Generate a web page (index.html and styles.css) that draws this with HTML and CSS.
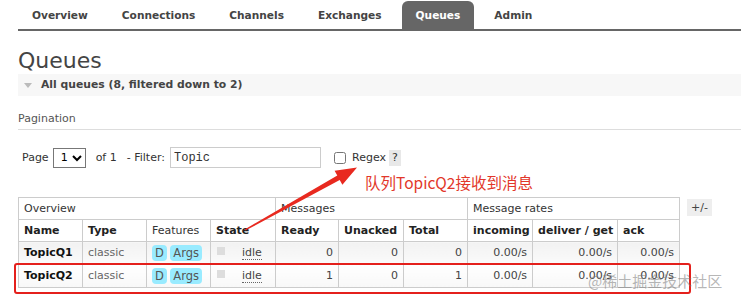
FILE: index.html
```html
<!DOCTYPE html>
<html>
<head>
  <title>Queues</title>
  <link rel="stylesheet" href="styles.css">
</head>
<body>
  <div class="page">
    <ul class="tabs">
      <li><a href="#">Overview</a></li>
      <li><a href="#">Connections</a></li>
      <li><a href="#">Channels</a></li>
      <li><a href="#">Exchanges</a></li>
      <li class="selected"><a href="#">Queues</a></li>
      <li><a href="#">Admin</a></li>
    </ul>

    <div class="content">
      <h1>Queues</h1>
      <div class="section-head"><span class="tri"></span>All queues (8, filtered down to 2)</div>

      <div class="pagination-head">Pagination</div>
      <div class="filter-row">
        <label>Page</label>
        <select class="page-select"><option>1</option></select>
        <span>of 1</span>
        <label class="filter-label">- Filter:</label>
        <input class="filter-input" type="text" value="Topic">
        <input class="regex-box" type="checkbox">
        <label>Regex</label>
        <span class="help">?</span>
      </div>

      <div class="table-area">
        <table class="list">
          <colgroup>
            <col style="width:64px"><col style="width:64px"><col style="width:64px"><col style="width:65px">
            <col style="width:63px"><col style="width:65px"><col style="width:64px">
            <col style="width:65px"><col style="width:85px"><col style="width:62px">
          </colgroup>
          <thead>
            <tr class="group">
              <th colspan="4">Overview</th>
              <th colspan="3">Messages</th>
              <th colspan="3">Message rates</th>
            </tr>
            <tr>
              <th>Name</th>
              <th>Type</th>
              <th class="plain">Features</th>
              <th>State</th>
              <th>Ready</th>
              <th>Unacked</th>
              <th>Total</th>
              <th>incoming</th>
              <th>deliver / get</th>
              <th>ack</th>
            </tr>
          </thead>
          <tbody>
            <tr class="alt1">
              <td class="name">TopicQ1</td>
              <td class="muted">classic</td>
              <td><span class="badge">D</span> <span class="badge">Args</span></td>
              <td><span class="state-dot"></span><span class="state">idle</span></td>
              <td class="num">0</td>
              <td class="num">0</td>
              <td class="num">0</td>
              <td class="num">0.00/s</td>
              <td class="num">0.00/s</td>
              <td class="num">0.00/s</td>
            </tr>
            <tr class="alt2">
              <td class="name">TopicQ2</td>
              <td class="muted">classic</td>
              <td><span class="badge">D</span> <span class="badge">Args</span></td>
              <td><span class="state-dot"></span><span class="state">idle</span></td>
              <td class="num">1</td>
              <td class="num">0</td>
              <td class="num">1</td>
              <td class="num">0.00/s</td>
              <td class="num">0.00/s</td>
              <td class="num">0.00/s</td>
            </tr>
          </tbody>
        </table>
        <span class="toggle">+/-</span>
      </div>
    </div>

    <!-- screenshot annotations -->
    <div class="note">队列TopicQ2接收到消息</div>
    <svg class="arrow" width="741" height="300" viewBox="0 0 741 300">
      <polygon fill="#e8291f" points="244.6,229.4 337.3,175.6 334.6,170.8 357,167.5 342.4,184.8 339.7,180 245.4,230.6"/>
    </svg>
    <div class="highlight"></div>
    <div class="watermark">@稀土掘金技术社区</div>
  </div>
</body>
</html>
```

FILE: styles.css
```css
body {
  margin: 0;
  font-family: "DejaVu Sans", Verdana, sans-serif;
  font-size: 11px;
  color: #444;
  background: #fff;
}

.page {
  position: relative;
  width: 741px;
  height: 300px;
  overflow: hidden;
}

.tabs {
  list-style: none;
  margin: 1px 0 0 18px;
  padding: 0;
  display: flex;
  border-bottom: 2px solid #666;
}

.tabs li {
  margin-right: 6px;
}

.tabs a {
  display: block;
  height: 28px;
  line-height: 29px;
  padding: 0 14px;
  font-size: 10.6px;
  font-weight: bold;
  color: #444;
  text-decoration: none;
  border-radius: 6px 6px 0 0;
}

.tabs li.selected a {
  background: #666;
  color: #fff;
}

.content {
  padding-left: 18px;
}

h1 {
  font-size: 22px;
  font-weight: normal;
  color: #444;
  margin: 17px 0 0;
  line-height: 26px;
}

.section-head {
  height: 22px;
  line-height: 22px;
  background: #f7f7f7;
  font-weight: bold;
  font-size: 10.8px;
  color: #444;
  display: flex;
  align-items: center;
}

.tri {
  width: 0;
  height: 0;
  margin: 0 9px 0 6px;
  border-left: 4px solid transparent;
  border-right: 4px solid transparent;
  border-top: 5px solid #bbb;
}

.pagination-head {
  margin-top: 17px;
  padding-bottom: 4px;
  border-bottom: 1px solid #ddd;
  color: #555;
  line-height: 12px;
}

.filter-row {
  display: flex;
  align-items: center;
  margin: 17px 0 0 4px;
  height: 21px;
  color: #333;
}

.page-select {
  width: 33px;
  height: 20px;
  margin: 0 10px 0 4px;
  font-family: "DejaVu Sans", Verdana, sans-serif;
  font-size: 11px;
  border: 1px solid #777;
  border-radius: 0;
  background: #fff;
  padding: 0 0 0 3px;
}

.filter-label {
  margin: 0 5px 0 10px;
}

.filter-input {
  width: 151px;
  height: 21px;
  box-sizing: border-box;
  border: 1px solid #ccc;
  font-family: "Liberation Mono", "DejaVu Sans Mono", monospace;
  font-size: 12px;
  padding: 0 3px;
  color: #333;
}

.regex-box {
  width: 12px;
  height: 12px;
  margin: 0 6px 0 13px;
}

.help {
  margin-left: 3px;
  background: #e8e8e8;
  padding: 2px 3px;
  line-height: 12px;
}

.table-area {
  display: flex;
  align-items: flex-start;
  margin-top: 29px;
}

table.list {
  border-collapse: collapse;
  table-layout: fixed;
  width: 661px;
}

table.list th,
table.list td {
  border: 1px solid #ccc;
  height: 21px;
  padding: 0 5px;
  text-align: left;
  white-space: nowrap;
  overflow: hidden;
}

table.list th {
  font-weight: bold;
  color: #222;
  background: #fff;
}

table.list tr.group th,
table.list th.plain {
  font-weight: normal;
  color: #333;
}

table.list tr.alt1 td {
  background: linear-gradient(#f2f2f2, #fafafa);
}

table.list tr.alt2 td {
  background: linear-gradient(#fff, #f8f8f8);
  height: 23px;
}

table.list td.name {
  font-weight: bold;
  color: #111;
}

table.list td.muted {
  color: #666;
}

table.list td.num {
  text-align: right;
}

.badge {
  display: inline-block;
  background: #99ebff;
  color: #555;
  border-radius: 4px;
  padding: 1px 3px;
  font-size: 11.5px;
  line-height: 14px;
}

.state-dot {
  display: inline-block;
  width: 8px;
  height: 8px;
  background: #ddd;
  margin: 0 17px 0 1px;
  vertical-align: 1px;
}

.state {
  border-bottom: 1px dotted #666;
  color: #444;
}

.toggle {
  margin: 2px 0 0 7px;
  background: #eee;
  padding: 2px 4px;
  color: #444;
  line-height: 13px;
}

.note {
  position: absolute;
  left: 365px;
  top: 172px;
  font-family: "Noto Sans CJK SC", sans-serif;
  font-size: 15.5px;
  line-height: 20px;
  color: #e2372a;
}

.arrow {
  position: absolute;
  left: 0;
  top: 0;
}

.highlight {
  position: absolute;
  left: 14px;
  top: 263px;
  width: 673px;
  height: 27px;
  border: 2px solid #e4201c;
  border-radius: 3px;
}

.watermark {
  position: absolute;
  left: 588px;
  top: 270px;
  font-family: "Noto Sans CJK SC", sans-serif;
  font-size: 15px;
  color: rgba(120, 120, 120, 0.55);
}
```
